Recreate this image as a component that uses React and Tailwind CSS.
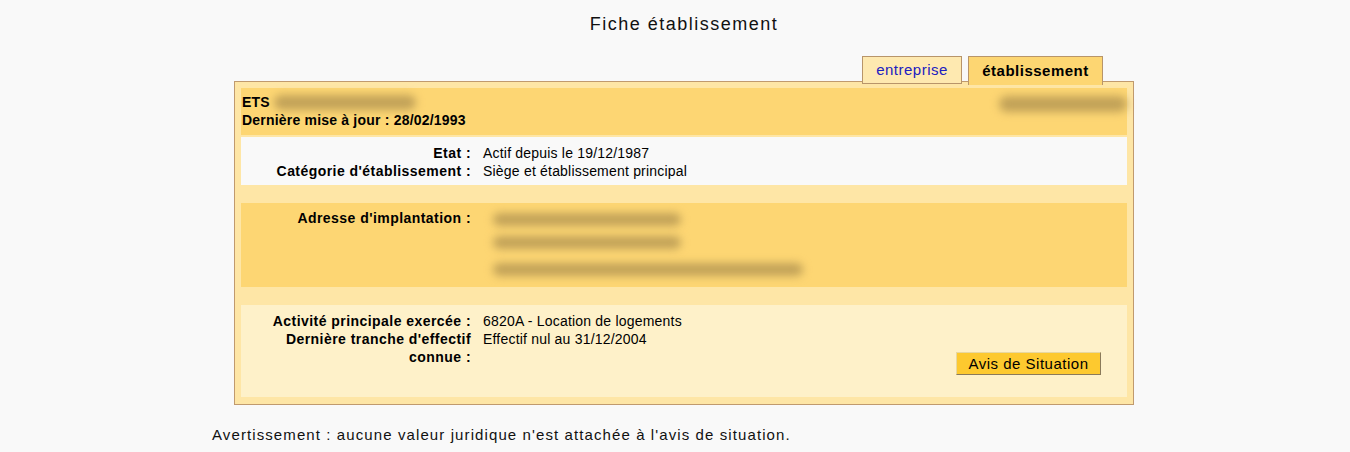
import React from 'react'

function Blur({ className }) {
  return <div className={`rounded-full bg-[#c2a258] blur-[4px] ${className}`} />
}

function Row({ label, children }) {
  return (
    <>
      <div className="text-right font-bold tracking-[0.45px]">{label}</div>
      <div>{children}</div>
    </>
  )
}

export default function App() {
  return (
    <div className="min-h-screen w-[1350px] bg-[#f9f9f9] text-black font-['Liberation_Sans',Arial,sans-serif]">
      <h1 className="ml-[234px] w-[900px] pt-[12px] text-center text-[18px] leading-[24px] tracking-[1.5px] text-[#111]">
        Fiche établissement
      </h1>

      <div className="ml-[234px] mt-[20px] w-[900px]">
        <div className="relative z-10 -mb-[4px] flex justify-end gap-[6px] pr-[31px] text-[15px] tracking-[0.5px]">
          <div className="flex h-[28px] w-[100px] items-center justify-center border border-[#b8956a] bg-[#fee9b0] text-[#2020c0]">
            entreprise
          </div>
          <div className="flex h-[29px] w-[135px] items-center justify-center border border-b-0 border-[#b8956a] bg-[#fdd672] font-bold">
            établissement
          </div>
        </div>

        <div className="border border-[#c09a6e] bg-[#fee6a6] px-[6px] pb-[7px] pt-[6px] text-[14px] leading-[18px] tracking-[0.2px]">
          <div className="flex h-[47px] items-start justify-between bg-[#fdd673] pl-[1px] pt-[5px] font-bold">
            <div>
              <div className="flex items-center gap-[4px]">
                ETS <Blur className="h-[15px] w-[142px]" />
              </div>
              <div>Dernière mise à jour : 28/02/1993</div>
            </div>
            <Blur className="mt-[3px] h-[16px] w-[128px]" />
          </div>

          <div className="mt-[2px] grid h-[48px] grid-cols-[230px_1fr] content-start gap-x-[12px] bg-[#f9f9f9] pt-[7px]">
            <Row label="Etat :">Actif depuis le 19/12/1987</Row>
            <Row label="Catégorie d'établissement :">Siège et établissement principal</Row>
          </div>

          <div className="mt-[18px] grid h-[84px] grid-cols-[230px_1fr] gap-x-[12px] bg-[#fdd673] pt-[6px]">
            <div className="text-right font-bold tracking-[0.45px]">Adresse d'implantation :</div>
            <div className="flex flex-col gap-[10px] pl-[10px] pt-[4px]">
              <Blur className="h-[13px] w-[188px]" />
              <Blur className="h-[13px] w-[188px]" />
              <Blur className="mt-[4px] h-[13px] w-[310px]" />
            </div>
          </div>

          <div className="mt-[18px] flex h-[92px] bg-[#fef1c9] pt-[7px]">
            <div className="grid flex-1 grid-cols-[230px_1fr] content-start gap-x-[12px]">
              <Row label="Activité principale exercée :">6820A - Location de logements</Row>
              <Row label="Dernière tranche d'effectif connue :">Effectif nul au 31/12/2004</Row>
            </div>
            <button className="mr-[26px] mt-[40px] h-[23px] w-[145px] self-start border border-t-[#e8d8a0] border-l-[#e8d8a0] border-r-[#8a7a5a] border-b-[#8a7a5a] bg-[#fdc92f] text-[15px] leading-[20px] tracking-[0.5px] text-black">
              Avis de Situation
            </button>
          </div>
        </div>
      </div>

      <p className="ml-[212px] mt-[21px] text-[15px] leading-[18px] tracking-[1.1px] text-[#111]">
        Avertissement : aucune valeur juridique n'est attachée à l'avis de situation.
      </p>
    </div>
  )
}
